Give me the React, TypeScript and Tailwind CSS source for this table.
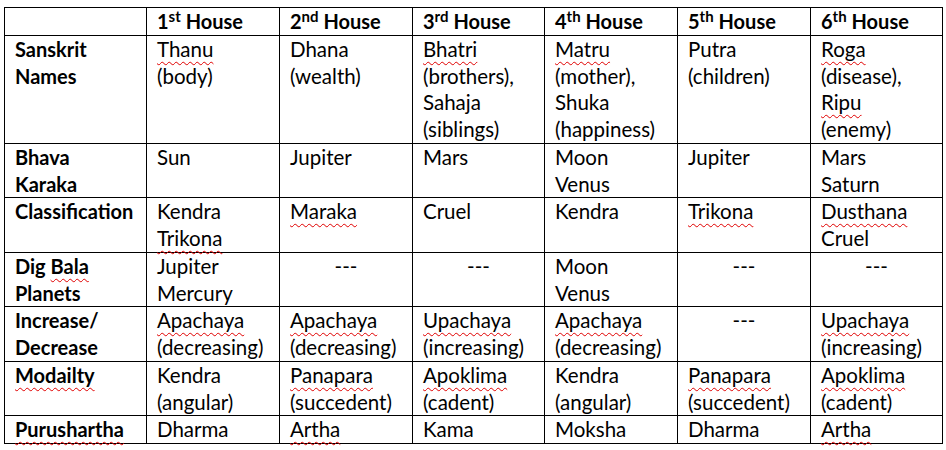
const S = ({ children }: { children: React.ReactNode }) => (
  <span className="underline decoration-wavy decoration-[#e00000] decoration-1 underline-offset-[4px] [text-decoration-skip-ink:none]">{children}</span>
);

type Cell = React.ReactNode;

const headers: Cell[] = [
  <>1<sup>st</sup> House</>,
  <>2<sup>nd</sup> House</>,
  <>3<sup>rd</sup> House</>,
  <>4<sup>th</sup> House</>,
  <>5<sup>th</sup> House</>,
  <>6<sup>th</sup> House</>,
];

const DASH = "center";

const rows: { label: Cell; cells: Cell[] }[] = [
  {
    label: <>Sanskrit<br />Names</>,
    cells: [
      <><S>Thanu</S><br />(body)</>,
      <>Dhana<br />(wealth)</>,
      <><S>Bhatri</S><br />(brothers),<br />Sahaja<br />(siblings)</>,
      <><S>Matru</S><br />(mother),<br />Shuka<br />(happiness)</>,
      <>Putra<br />(children)</>,
      <><S>Roga</S><br />(disease),<br /><S>Ripu</S><br />(enemy)</>,
    ],
  },
  {
    label: <>Bhava<br />Karaka</>,
    cells: [<>Sun</>, <>Jupiter</>, <>Mars</>, <>Moon<br />Venus</>, <>Jupiter</>, <>Mars<br />Saturn</>],
  },
  {
    label: <>Classification</>,
    cells: [
      <>Kendra<br /><S>Trikona</S></>,
      <><S>Maraka</S></>,
      <>Cruel</>,
      <>Kendra</>,
      <><S>Trikona</S></>,
      <><S>Dusthana</S><br />Cruel</>,
    ],
  },
  {
    label: <>Dig <S>Bala</S><br />Planets</>,
    cells: [<>Jupiter<br />Mercury</>, DASH, DASH, <>Moon<br />Venus</>, DASH, DASH],
  },
  {
    label: <>Increase/<br />Decrease</>,
    cells: [
      <><S>Apachaya</S><br />(decreasing)</>,
      <><S>Apachaya</S><br />(decreasing)</>,
      <><S>Upachaya</S><br />(increasing)</>,
      <><S>Apachaya</S><br />(decreasing)</>,
      DASH,
      <><S>Upachaya</S><br />(increasing)</>,
    ],
  },
  {
    label: <><S>Modailty</S></>,
    cells: [
      <>Kendra<br />(angular)</>,
      <><S>Panapara</S><br />(succedent)</>,
      <><S>Apoklima</S><br />(cadent)</>,
      <>Kendra<br />(angular)</>,
      <><S>Panapara</S><br />(succedent)</>,
      <><S>Apoklima</S><br />(cadent)</>,
    ],
  },
  {
    label: <><S>Purushartha</S></>,
    cells: [<>Dharma</>, <><S>Artha</S></>, <>Kama</>, <>Moksha</>, <>Dharma</>, <><S>Artha</S></>],
  },
];

const widths = ["w-[142px]", "w-[133px]", "w-[133px]", "w-[132px]", "w-[133px]", "w-[133px]", "w-[132px]"];

export default function App() {
  return (
    <div className="min-h-[450px] bg-white pl-[4px] pt-[7px] font-['Lato','Open_Sans',sans-serif] text-[20.5px] leading-[26.75px] text-black">
      <table className="table-fixed border-collapse w-[939px]">
        <colgroup>
          {widths.map((w, i) => (
            <col key={i} className={w} />
          ))}
        </colgroup>
        <thead>
          <tr>
            <th className="border border-black" />
            {headers.map((h, i) => (
              <th key={i} className="border border-black pl-[10px] pr-1 text-left align-top text-[20px] font-bold">
                {h}
              </th>
            ))}
          </tr>
        </thead>
        <tbody>
          {rows.map((r, ri) => (
            <tr key={ri}>
              <td className="border border-black pl-[10px] pr-1 align-top text-[20px] font-bold">{r.label}</td>
              {r.cells.map((c, ci) =>
                c === DASH ? (
                  <td key={ci} className="border border-black px-1 align-top text-center">---</td>
                ) : (
                  <td key={ci} className="border border-black pl-[10px] pr-1 align-top">{c}</td>
                )
              )}
            </tr>
          ))}
        </tbody>
      </table>
    </div>
  );
}
